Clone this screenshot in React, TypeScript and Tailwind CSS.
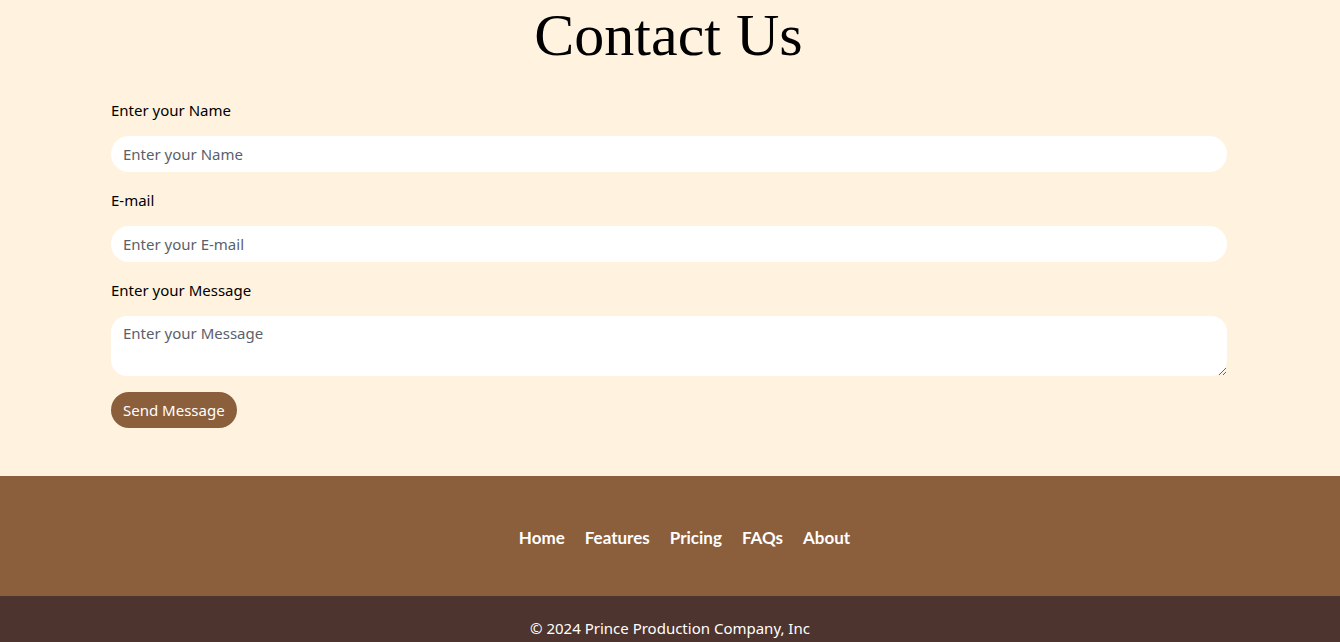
import React from 'react';

const navLinks = ['Home', 'Features', 'Pricing', 'FAQs', 'About'];

export default function App() {
  return (
    <div className="min-h-screen bg-[#fff3e0] font-['Noto_Sans','Liberation_Sans',sans-serif] text-[15px]">
      {/* Contact form */}
      <section className="pt-[2px] pb-12">
        <h1 className="pr-[3px] text-center font-['Liberation_Serif',serif] text-[60px] leading-[66px] text-black">
          Contact Us
        </h1>
        <form className="ml-[111px] mt-[30px] w-[1116px]" onSubmit={(e) => e.preventDefault()}>
          <label className="block leading-6 text-black">Enter your Name</label>
          <input
            type="text"
            placeholder="Enter your Name"
            className="mt-[14px] block h-9 w-full rounded-full bg-white px-3 text-[15px] outline-none placeholder:text-[#5b5f6b]"
          />
          <label className="mt-4 block leading-6 text-black">E-mail</label>
          <input
            type="email"
            placeholder="Enter your E-mail"
            className="mt-[14px] block h-9 w-full rounded-full bg-white px-3 text-[15px] outline-none placeholder:text-[#5b5f6b]"
          />
          <label className="mt-4 block leading-6 text-black">Enter your Message</label>
          <textarea
            placeholder="Enter your Message"
            className="mt-[14px] block h-[60px] w-full rounded-2xl bg-white px-3 py-[6px] text-[15px] outline-none placeholder:text-[#5b5f6b]"
          />
          <button
            type="submit"
            className="mt-4 h-9 rounded-full bg-[#8b5e3c] px-3 text-[15px] text-white"
          >
            Send Message
          </button>
        </form>
      </section>

      {/* Footer nav */}
      <footer>
        <div className="flex h-[120px] items-center justify-center bg-[#8b5e3c] pl-[29px] pt-1">
          <ul className="flex gap-5 font-['Comic_Sans_MS','Lato',sans-serif] text-[17px] font-bold text-white">
            {navLinks.map((link) => (
              <li key={link}>
                <a href="#">{link}</a>
              </li>
            ))}
          </ul>
        </div>
        <div className="flex h-[64px] justify-center bg-[#4e342e] pt-5 text-[15px] text-white">
          <p className="leading-6">© 2024 Prince Production Company, Inc</p>
        </div>
      </footer>
    </div>
  );
}
